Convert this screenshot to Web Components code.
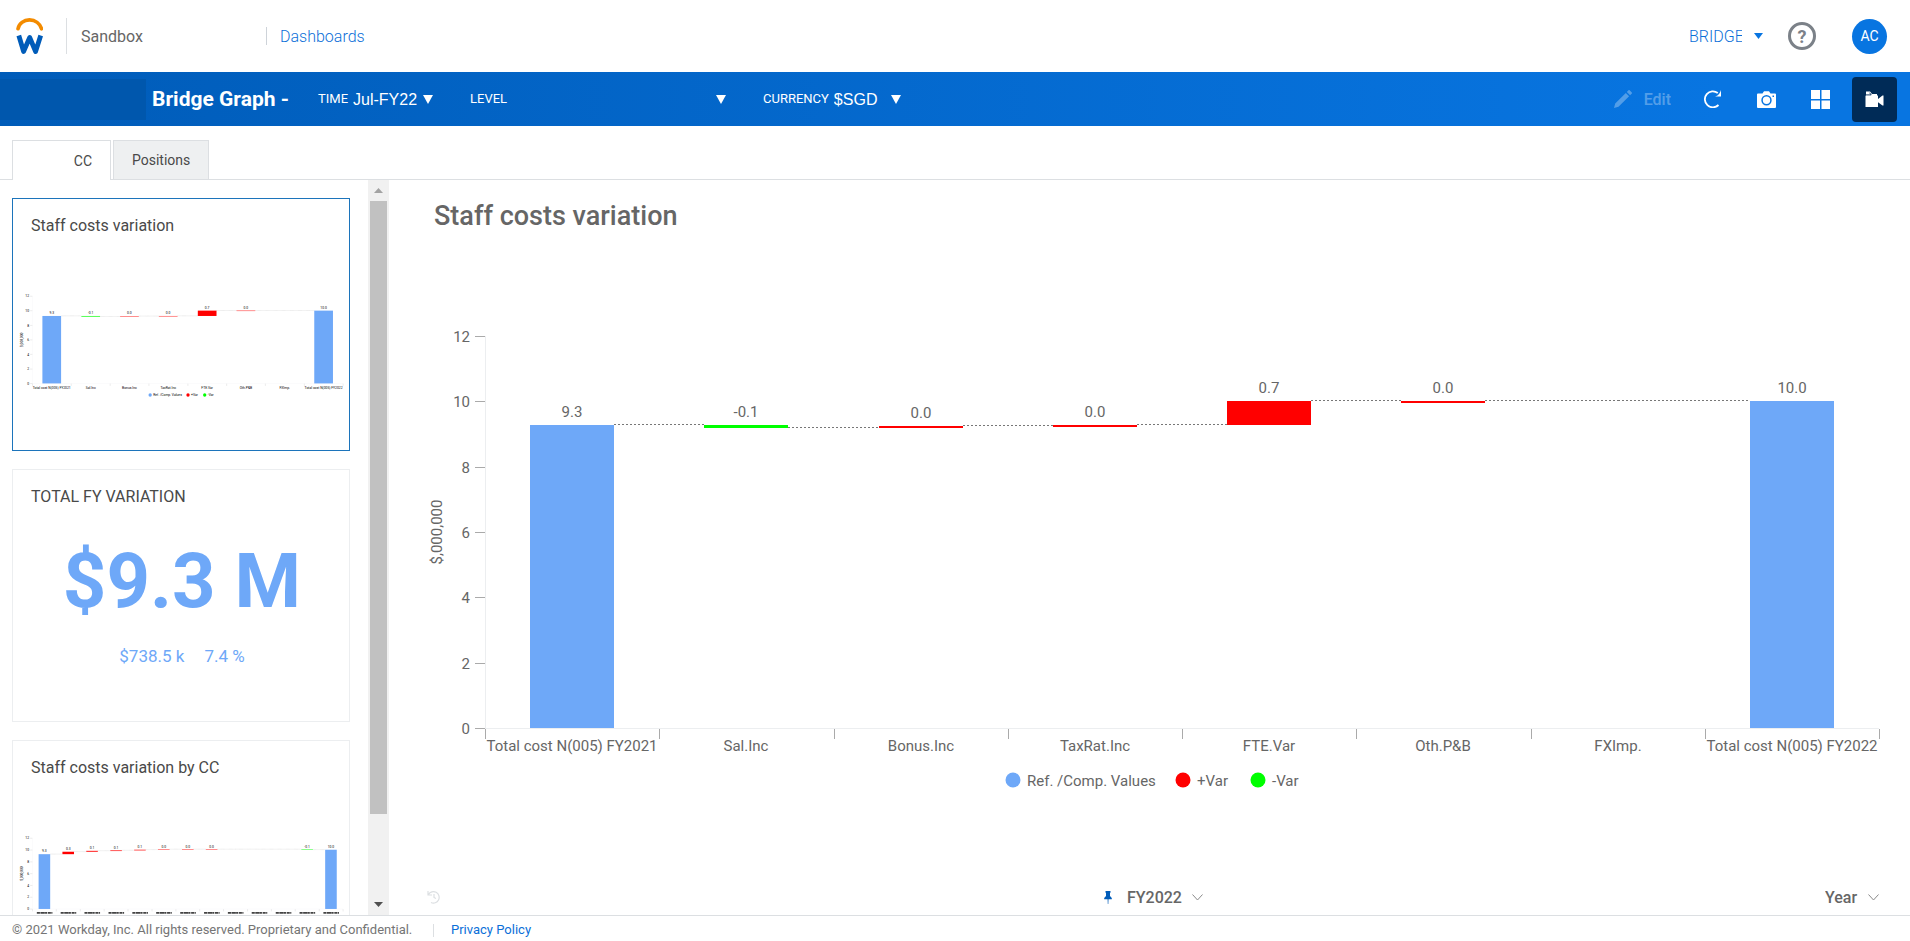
<!DOCTYPE html>
<html lang="en">
<head>
<meta charset="utf-8">
<title>Bridge Graph - Dashboards</title>
<style>
html, body { margin: 0; height: 100%; }
body { font-family: Roboto, "Liberation Sans", sans-serif; color: #666; background: #fff; }
</style>
</head>
<body>
<dash-app></dash-app>
<script>
const define = (name, html, setup) => {
  const tpl = document.createElement('template');
  tpl.innerHTML = html;
  customElements.define(name, class extends HTMLElement {
    constructor() {
      super();
      this.attachShadow({ mode: 'open' }).append(tpl.content.cloneNode(true));
    }
    connectedCallback() { if (setup) setup(this, this.shadowRoot); }
  });
};

/* Labelled drop-down: label, select and an arrow at the right end */
define('drop-down', `
<style>
  :host { display: flex; align-items: center; }
  label { font-size: 13px; line-height: 20px; margin-right: 5px; white-space: nowrap; }
  label[hidden] { display: none; }
  select { appearance: none; border: 0; padding: 0; margin: 0; background: transparent; color: inherit;
    font: inherit; font-family: var(--value-font, inherit); flex: 1; min-width: 0; height: 24px; outline: 0; }
  option { color: #333; }
  svg { flex: none; pointer-events: none; }
</style>
<label for="s"></label><select id="s"></select><slot name="arrow"></slot>
`, (host, root) => {
  const label = root.querySelector('label'), select = root.querySelector('select');
  if (host.hasAttribute('label')) label.textContent = host.getAttribute('label');
  else { label.hidden = true; select.setAttribute('aria-label', host.getAttribute('name')); }
  select.innerHTML = '<option></option>';
  select.options[0].textContent = host.getAttribute('value') || '';
});

define('top-header', `
<style>
  :host { display: flex; align-items: center; height: 72px; flex: none; padding: 0 23px 0 16px; box-sizing: border-box; font-size: 16px; }
  .rule { width: 1px; height: 36px; background: #dcdfe2; margin: 0 14px 0 23px; }
  .name { width: 185px; }
  .bar { width: 1px; height: 18px; background: #ced3d9; margin-right: 13px; }
  a { color: #0b6fd8; font-weight: 300; text-decoration: none; }
  .space { flex: 1; }
  drop-down { width: 74px; color: #0b6fd8; font-weight: 300; margin-right: 25px; }
  drop-down svg { margin-left: 12px; }
  button { border: 0; padding: 0; background: none; font: inherit; cursor: pointer; }
  .help { width: 28px; height: 28px; margin-right: 36px; }
  .help span { display: flex; box-sizing: border-box; width: 28px; height: 28px; border: 3px solid #7b8188; border-radius: 50%; align-items: center; justify-content: center; color: #7b8188; font-size: 18px; font-weight: 700; }
  .me { width: 35px; height: 35px; border-radius: 50%; background: #0875e1; color: #fff; font-size: 14px; }
</style>
<svg width="27" height="36" viewBox="0 0 27 36" aria-label="Workday" role="img">
  <path d="M2 10.800C3 5.500 7.800 1.900 13.500 1.900S24 5.500 25.500 10.800" fill="none" stroke="#f38b00" stroke-width="3.600" stroke-linecap="round"/>
  <path d="M2.800 17.500L7.600 33.500L13.700 19.500L19.600 33.500L24.700 17.500" fill="none" stroke="#005cb9" stroke-width="4.800" stroke-linejoin="round"/>
</svg>
<div class="rule"></div><span class="name">Sandbox</span><div class="bar"></div><a href="#dashboards">Dashboards</a><div class="space"></div>
<drop-down name="Workspace" value="BRIDGE"><svg slot="arrow" width="9" height="6"><path d="M0 0h9L4.500 6z" fill="#0875e1"/></svg></drop-down>
<button class="help" aria-label="Help"><span>?</span></button>
<button class="me">AC</button>
`);

define('filter-bar', `
<style>
  :host { display: flex; align-items: center; height: 54px; flex: none; padding-right: 13px; box-sizing: border-box; color: #fff;
    background: linear-gradient(90deg, #005cb9, #0875e1 90%); }
  .patch { width: 146px; height: 41px; background: #0057ad; margin-right: 6px; }
  h1 { margin: 0; width: 166px; font-size: 21px; line-height: 24px; font-weight: 700; white-space: nowrap; }
  .filters { display: flex; gap: 37px; flex: 1; font-size: 16px; --value-font: "Liberation Sans", sans-serif; }
  .time { width: 115px; } .level { width: 256px; } .cur { width: 138px; }
  button { border: 0; padding: 0; background: none; color: inherit; font: inherit; display: flex; align-items: center; justify-content: center; }
  .edit { gap: 12px; opacity: .3; font-size: 16px; font-weight: 500; margin-right: 19px; }
  .tools { display: flex; gap: 9px; }
  .tools button { width: 45px; height: 45px; border-radius: 4px; }
  .tools .on { background: #002b57; }
</style>
<div class="patch"></div><h1>Bridge Graph -</h1>
<div class="filters">
  <drop-down class="time" label="TIME" value="Jul-FY22"><svg slot="arrow" width="10" height="9"><path d="M0 0h10L5 9z" fill="#fff"/></svg></drop-down>
  <drop-down class="level" label="LEVEL"><svg slot="arrow" width="10" height="9"><path d="M0 0h10L5 9z" fill="#fff"/></svg></drop-down>
  <drop-down class="cur" label="CURRENCY" value="$SGD"><svg slot="arrow" width="10" height="9"><path d="M0 0h10L5 9z" fill="#fff"/></svg></drop-down>
</div>
<button class="edit" disabled><svg width="18" height="18" viewBox="0 0 18 18"><path d="M0 18l1.200-4.500L11.800 2.900l3.300 3.300L4.500 16.800zM12.800 1.900L14.500.2a.8.8 0 0 1 1.100 0l2.200 2.200a.8.8 0 0 1 0 1.100L16.100 5.200z" fill="#fff"/></svg>Edit</button>
<div class="tools">
  <button aria-label="Refresh"><svg width="18" height="18" viewBox="0 0 18 18"><path d="M14.500 15A8 8 0 1 1 13.800 3" fill="none" stroke="#fff" stroke-width="1.800"/><path d="M17 0v6.500H9.800c3 0 5.500-1.500 7.200-6.500z" fill="#fff"/></svg></button>
  <button aria-label="Snapshot"><svg width="19" height="17" viewBox="0 0 19 17"><path fill-rule="evenodd" d="M1 2.500h4.500L7 .3h5l1.500 2.200H18a1 1 0 0 1 1 1V16a1 1 0 0 1-1 1H1a1 1 0 0 1-1-1V3.500a1 1 0 0 1 1-1zM9.500 4a5.200 5.200 0 1 0 0 10.400a5.200 5.200 0 0 0 0-10.400zm0 1.500a3.700 3.700 0 1 1 0 7.400a3.700 3.700 0 0 1 0-7.400zM15.500 4.500v1.500H17V4.500z" fill="#fff"/></svg></button>
  <button aria-label="Grid"><svg width="19" height="19"><path d="M0 0h9v9H0zM10.500 0h8.500v9h-8.500zM0 10.500h9v8.500H0zM10.500 10.500h8.500v8.500h-8.500z" fill="#fff"/></svg></button>
  <button class="on" aria-label="Presentation"><svg width="19" height="16" viewBox="0 0 19 16"><path d="M1 .5h4l2 2.500h5v2H1zM.500 4.500h12.500v3.500L17.500 4.500H18.500V14.500H17.500L13 11.200V16H.500z" fill="#fff"/><path d="M0 3.900h6.200L4.500 1.700" fill="none" stroke="#002b57" stroke-width=".9"/></svg></button>
</div>
`);

define('tab-strip', `
<style>
  :host { display: flex; flex: none; height: 54px; box-sizing: border-box; padding: 14px 12px 0; gap: 2px; border-bottom: 1px solid #dcdfe2; }
  button { height: 39px; box-sizing: border-box; border: 1px solid #dcdfe2; border-bottom: 0; background: #eef0f1; padding: 0 18px;
    font: 14px/20px Roboto, "Liberation Sans", sans-serif; color: #494949; }
  .on { width: 99px; height: 40px; background: #fff; text-align: right; }
</style>
<button role="tab" class="on" aria-selected="true">CC</button><button role="tab">Positions</button>
`);

const FULL = {
  rows: [
    ['Total cost N(005) FY2021', '9.3', 0, 9.28, '#6ea8f8'],
    ['Sal.Inc', '-0.1', 9.28, 9.19, '#0f0'],
    ['Bonus.Inc', '0.0', 9.19, 9.26, '#f00'],
    ['TaxRat.Inc', '0.0', 9.24, 9.28, '#f00'],
    ['FTE.Var', '0.7', 9.28, 10.02, '#f00'],
    ['Oth.P&B', '0.0', 10, 10.02, '#f00'],
    ['FXImp.', '', 10.02, 10.02, ''],
    ['Total cost N(005) FY2022', '10.0', 0, 10.02, '#6ea8f8']
  ],
  bottom: 137, legend: true
};
const BY_CC = {
  rows: [
    ['', '9.3', 0, 9.3, '#6ea8f8'], ['', '0.3', 9.3, 9.7, '#f00'], ['', '0.1', 9.7, 9.84, '#f00'],
    ['', '0.1', 9.8, 9.94, '#f00'], ['', '0.1', 9.92, 10.05, '#f00'], ['', '0.0', 10.02, 10.1, '#f00'],
    ['', '0.0', 10.05, 10.12, '#f00'], ['', '0.0', 10.05, 10.12, '#f00'], ['', '', 10.1, 10.1, ''],
    ['', '', 10.1, 10.1, ''], ['', '', 10.1, 10.1, ''], ['', '-0.1', 10.12, 10.04, '#0f0'],
    ['', '10.0', 0, 10.02, '#6ea8f8']
  ],
  bottom: 211, legend: false
};

/* Waterfall chart: fills its box, or scales a fixed canvas when it is a thumbnail */
customElements.define('bridge-chart', class extends HTMLElement {
  constructor() {
    super();
    this.attachShadow({ mode: 'open' }).innerHTML = `
<style>
  :host { display: block; min-height: 0; }
  svg { display: block; overflow: visible; }
  text { font: 15px Roboto, "Liberation Sans", sans-serif; fill: #666; text-anchor: middle; }
  .start { text-anchor: start; } .end { text-anchor: end; }
  :host([thumbnail]) text { fill: #000; }
</style><div id="box"></div>`;
  }
  connectedCallback() {
    this.draw();
    if (!this.hasAttribute('thumbnail')) new ResizeObserver(() => this.draw()).observe(this);
  }
  draw() {
    const thumb = this.hasAttribute('thumbnail');
    const W = thumb ? 1446 : this.clientWidth, H = thumb ? 615 : this.clientHeight;
    if (W < 100 || H < 240) return;
    const data = this.getAttribute('data') === 'cc' ? BY_CC : FULL;
    const L = 51, T = 86, B = H - data.bottom, n = data.rows.length;
    const band = (W - L) / n, bw = Math.round(band * 0.4845);
    const y = v => Math.round(B - v * (B - T) / 12);
    const out = [];
    const line = (x1, y1, x2, y2, c, extra = '') =>
      out.push(`<line x1="${x1}" y1="${y1}" x2="${x2}" y2="${y2}" stroke="${c}" ${extra}/>`);
    const text = (x, yy, s, cls = '') => out.push(`<text x="${x}" y="${yy}" class="${cls}">${s.replace('&', '&amp;')}</text>`);
    line(L + .5, T, L + .5, B, '#eceef0');
    line(L, B + .5, W, B + .5, '#eceef0');
    for (let v = 0; v <= 12; v += 2) {
      line(L - 10, y(v) + .5, L, y(v) + .5, '#aaa');
      text(L - 15, y(v) + 6, String(v), 'end');
    }
    data.rows.forEach((r, i) => {
      const [name, label, a, b, colour] = r;
      const left = j => Math.round(L + band * (j + .5) - bw / 2);
      const x = left(i), mid = x + bw / 2;
      const top = y(Math.max(a, b)), h = Math.max(2, y(Math.min(a, b)) - top);
      if (i < n - 1) {
        const x2 = left(i + 1);
        const from = colour ? x + bw : mid, to = data.rows[i + 1][4] ? x2 : x2 + bw / 2;
        line(from, y(b) - .5, to, y(b) - .5, '#777', 'stroke-dasharray="2 2"');
      }
      if (colour) out.push(`<rect x="${x}" y="${top}" width="${bw}" height="${h}" fill="${colour}"/>`);
      if (label) text(mid, top - 8, label);
      if (name) text(mid, B + 23, name);
      else if (thumb) line(mid - 34, B + 18, mid + 36, B + 18, '#444', 'stroke-width="8" stroke-dasharray="14 2 20 1 9 3"');
    });
    for (let i = 0; i <= n; i++) {
      const x = Math.round(L + band * i) + .5;
      line(x, B + 1, x, B + 11, '#aaa');
    }
    const my = (T + B) / 2;
    out.push(`<text x="8" y="${my}" transform="rotate(-90 8 ${my})">$,000,000</text>`);
    if (data.legend) {
      const x0 = Math.round((W + L) / 2) - 169, ly = B + 52;
      [[0, 'Ref. /Comp. Values', '#6ea8f8'], [170, '+Var', '#f00'], [245, '-Var', '#0f0']].forEach(([dx, s, c]) => {
        out.push(`<circle cx="${x0 + dx}" cy="${ly}" r="7.5" fill="${c}"/>`);
        text(x0 + dx + 14, ly + 6, s, 'start');
      });
    }
    const size = thumb ? 'width="100%"' : `width="${W}" height="${H}"`;
    this.shadowRoot.getElementById('box').innerHTML =
      `<svg ${size} viewBox="0 0 ${W} ${H}" role="img" aria-label="Bridge chart">${out.join('')}</svg>`;
  }
});

define('thumb-card', `
<style>
  :host { display: block; flex: none; height: 253px; box-sizing: border-box; border: 1px solid #eceef0; padding: 16px 6px 0 8px; overflow: hidden; }
  :host([selected]) { border-color: #1c74bb; }
  h2 { margin: 0 10px 40px; font-size: 16px; line-height: 22px; font-weight: 400; color: #494949; white-space: nowrap; }
</style>
<h2></h2><slot></slot>
`, (host, root) => { root.querySelector('h2').textContent = host.getAttribute('heading'); });

define('kpi-value', `
<style>
  :host { display: flex; flex-direction: column; align-items: center; color: #6ea8f8; margin-top: -12px; }
  .big { font-size: 76px; line-height: 90px; font-weight: 700; white-space: nowrap; }
  .sub { display: flex; gap: 20px; font-size: 17px; line-height: 24px; margin-top: 18px; }
</style>
<div class="big"><slot></slot></div>
<div class="sub"><slot name="delta"></slot><slot name="pct"></slot></div>
`);

define('side-panel', `
<style>
  :host { display: flex; width: 389px; flex: none; min-height: 0; }
  .list { flex: 1; display: flex; flex-direction: column; gap: 18px; padding: 18px 18px 0 12px; overflow: hidden; }
  .scroll { width: 21px; background: #f1f1f1; display: flex; flex-direction: column; align-items: center; }
  .up, .down { height: 21px; display: flex; align-items: center; }
  .track { flex: 1; }
  .thumb { width: 17px; height: 88.5%; background: #c1c1c1; }
</style>
<div class="list">
  <thumb-card heading="Staff costs variation" selected><bridge-chart thumbnail></bridge-chart></thumb-card>
  <thumb-card heading="TOTAL FY VARIATION"><kpi-value>$9.3 M<span slot="delta">$738.5 k</span><span slot="pct">7.4 %</span></kpi-value></thumb-card>
  <thumb-card heading="Staff costs variation by CC"><bridge-chart thumbnail data="cc"></bridge-chart></thumb-card>
</div>
<div class="scroll">
  <div class="up"><svg width="9" height="5"><path d="M0 5h9L4.500 0z" fill="#a3a3a3"/></svg></div>
  <div class="track"><div class="thumb"></div></div>
  <div class="down"><svg width="9" height="5"><path d="M0 0h9L4.500 5z" fill="#505050"/></svg></div>
</div>
`);

define('main-panel', `
<style>
  :host { display: flex; flex-direction: column; flex: 1; min-width: 0; padding: 19px 31px 0 45px; }
  h2 { margin: 0; font-size: 27px; line-height: 34px; font-weight: 500; color: #666; }
  bridge-chart { flex: 1; margin-top: 17px; }
  .row { display: grid; grid-template-columns: 1fr auto 1fr; align-items: center; height: 36px; margin: 14px 0 0; font-size: 16px; font-weight: 500; }
  .mid { display: flex; align-items: center; gap: 15px; margin-right: 6px; }
  .mid drop-down { width: 76px; }
  .year { width: 54px; justify-self: end; }
  button { border: 0; padding: 0; background: none; justify-self: start; display: flex; margin-left: -7px; }
</style>
<h2>Staff costs variation</h2>
<bridge-chart></bridge-chart>
<div class="row">
  <button aria-label="Reset" disabled><svg width="13" height="14" viewBox="0 0 13 14"><path d="M1 1v4h4M1.500 4.500A5.700 5.700 0 1 1 4 12.500M7 4v3.500l2 1" fill="none" stroke="#dcdfe2" stroke-width="1.200"/></svg></button>
  <div class="mid">
    <svg width="8" height="13" viewBox="0 0 8 13"><path d="M1.500 0h5v1.500L6 2v3l1.800 2v1.200H.200V7L2 5V2l-.5-.5zM3.600 8h.9l-.2 5h-.5z" fill="#005cb9"/></svg>
    <drop-down name="Period" value="FY2022"><svg slot="arrow" width="11" height="7"><path d="M.500 .500L5.500 6L10.500 .500" fill="none" stroke="#8a8a8a"/></svg></drop-down>
  </div>
  <drop-down class="year" name="Granularity" value="Year"><svg slot="arrow" width="11" height="7"><path d="M.500 .500L5.500 6L10.500 .500" fill="none" stroke="#8a8a8a"/></svg></drop-down>
</div>
`);

define('page-footer', `
<style>
  :host { display: flex; align-items: center; flex: none; height: 26px; box-sizing: border-box; border-top: 1px solid #dcdfe2; padding: 3px 12px 0; font-size: 13px; line-height: 20px; color: #757575; white-space: nowrap; }
  i { width: 1px; height: 13px; background: #dcdfe2; margin: 0 17px; }
  .legal { width: 404px; }
  a { color: #0b6fd8; text-decoration: none; }
</style>
<span class="legal">© 2021 Workday, Inc. All rights reserved. Proprietary and Confidential.</span><i></i><a href="#privacy">Privacy Policy</a>
`);

define('dash-app', `
<style>
  :host { display: flex; flex-direction: column; height: 100vh; overflow: hidden; }
  .body { display: flex; flex: 1; min-height: 0; }
</style>
<top-header></top-header>
<filter-bar></filter-bar>
<tab-strip></tab-strip>
<div class="body"><side-panel></side-panel><main-panel></main-panel></div>
<page-footer></page-footer>
`);
</script>
</body>
</html>
